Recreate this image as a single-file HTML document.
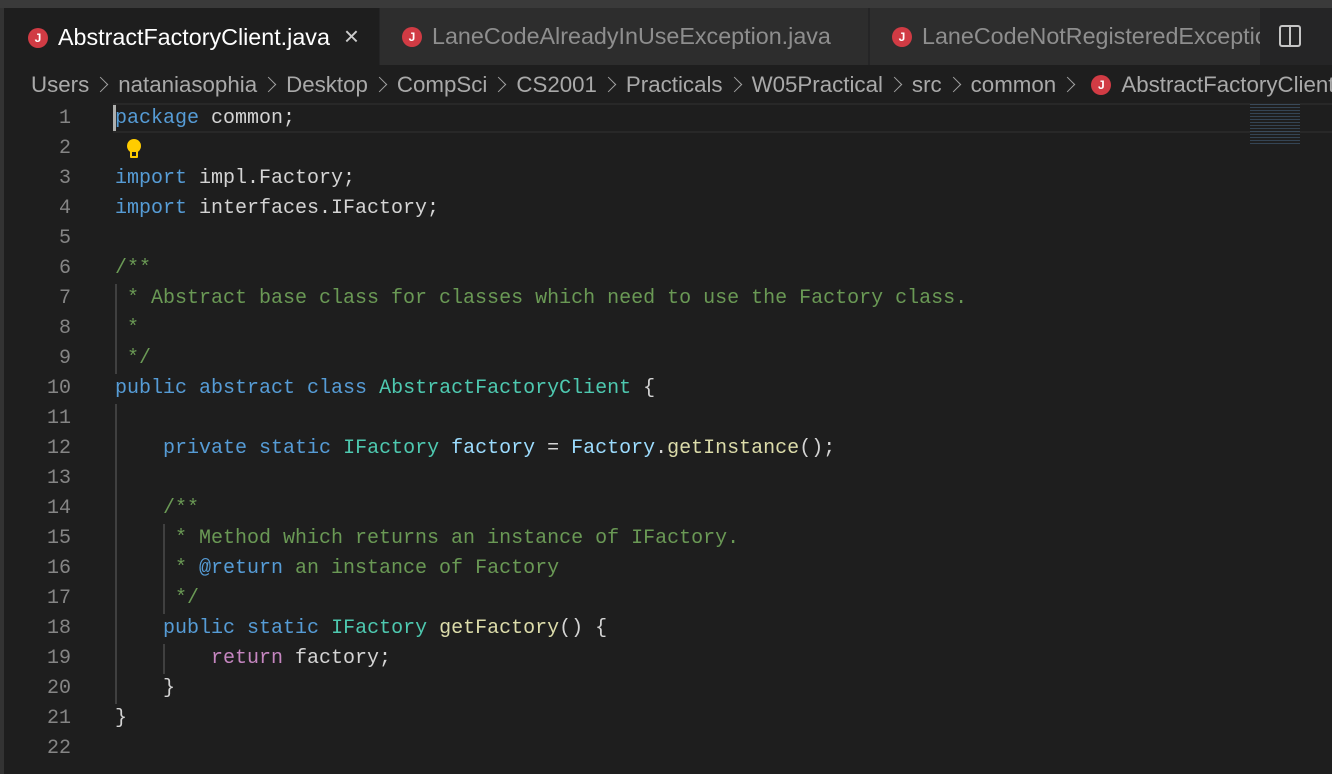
<!DOCTYPE html>
<html><head><meta charset="utf-8"><style>
*{margin:0;padding:0;box-sizing:border-box}
body{width:1332px;height:774px;background:#1e1e1e;overflow:hidden;position:relative;font-family:"Liberation Sans",sans-serif}
.top{position:absolute;left:0;top:0;width:1332px;height:8px;background:#3a3a3a}
.lstrip{position:absolute;left:0;top:8px;width:4px;height:766px;background:#333}
.tabbar{position:absolute;left:4px;top:8px;width:1328px;height:57px;background:#252526}
.tab{position:absolute;top:0;height:57px;background:#2d2d2d;color:#8e8e8e;font-size:23.3px;line-height:57px;white-space:nowrap;overflow:hidden}
.tab.act{background:#1e1e1e;color:#fff}
.j{display:inline-block;width:20px;height:20px;border-radius:50%;background:#d13b44;color:#fff;font-size:12px;font-weight:bold;line-height:20px;text-align:center;vertical-align:3px;margin-right:10px}
.bc{position:absolute;left:31px;top:70px;width:1301px;overflow:hidden;color:#a9a9a9;font-size:22.3px;white-space:nowrap;line-height:30px}
.bc .s{display:inline-block;width:11px;height:11px;border-right:1.5px solid #a0a0a0;border-top:1.5px solid #a0a0a0;transform:rotate(45deg);margin:0 12px 2px 6px}
.code{position:absolute;left:0;top:104px;font-family:"Liberation Mono","DejaVu Sans Mono",monospace;font-size:20px}
.ln{position:absolute;left:0;width:71px;text-align:right;color:#858585;height:30px;line-height:30px}
.l{position:absolute;left:115px;height:30px;line-height:30px;color:#d4d4d4;white-space:pre}
.k{color:#569cd6}.c{color:#6a9955}.t{color:#4ec9b0}.f{color:#dcdcaa}.v{color:#9cdcfe}.p{color:#c586c0}
.g{position:absolute;width:2px;background:#404040}
</style></head><body>
<div class="top"></div><div class="lstrip"></div>
<div class="tabbar">
<div class="tab act" style="left:0;width:375px;padding-left:24px"><span class="j">J</span>AbstractFactoryClient.java<span style="margin-left:14px;color:#ccc;font-size:26px">×</span></div>
<div class="tab" style="left:376px;width:488px;padding-left:22px"><span class="j">J</span>LaneCodeAlreadyInUseException.java</div>
<div class="tab" style="left:866px;width:390px;padding-left:22px"><span class="j">J</span>LaneCodeNotRegisteredException.java</div>
<div style="position:absolute;left:1275px;top:17px;width:22px;height:22px;border:2px solid #c5c5c5;border-radius:3px"><div style="position:absolute;left:8px;top:0;width:2px;height:18px;background:#c5c5c5"></div></div>
</div>
<div class="bc">Users<span class="s"></span>nataniasophia<span class="s"></span>Desktop<span class="s"></span>CompSci<span class="s"></span>CS2001<span class="s"></span>Practicals<span class="s"></span>W05Practical<span class="s"></span>src<span class="s"></span>common<span class="s"></span> <span class="j" style="margin-right:10px">J</span>AbstractFactoryClient.java</div>
<div style="position:absolute;left:113px;top:103px;width:1219px;height:30px;border-top:2px solid #282828;border-bottom:2px solid #282828"></div>
<div style="position:absolute;left:113px;top:105px;width:3px;height:26px;background:#aeafad"></div>
<div style="position:absolute;left:1250px;top:102px;width:50px;height:42px;opacity:.5;background:repeating-linear-gradient(#1e1e1e 0 2px,#4a6a8a 2px 3px)"></div>
<div class="g" style="left:115px;top:284px;height:90px"></div>
<div class="g" style="left:115px;top:404px;height:300px"></div>
<div class="g" style="left:163px;top:524px;height:90px"></div>
<div class="g" style="left:163px;top:644px;height:30px"></div>
<svg style="position:absolute;left:124px;top:137px" width="20" height="24" viewBox="0 0 20 24"><circle cx="10" cy="9" r="7" fill="#ffcc00"/><rect x="6" y="13" width="8" height="8" rx="1" fill="#ffcc00"/><rect x="8" y="15" width="4" height="4" fill="#1e1e1e"/></svg>
<div class="code">
<div class="ln" style="top:0">1</div><div class="l" style="top:0"><span class="k">package</span> common;</div>
<div class="ln" style="top:30px">2</div>
<div class="ln" style="top:60px">3</div><div class="l" style="top:60px"><span class="k">import</span> impl.Factory;</div>
<div class="ln" style="top:90px">4</div><div class="l" style="top:90px"><span class="k">import</span> interfaces.IFactory;</div>
<div class="ln" style="top:120px">5</div>
<div class="ln" style="top:150px">6</div><div class="l c" style="top:150px">/**</div>
<div class="ln" style="top:180px">7</div><div class="l c" style="top:180px"> * Abstract base class for classes which need to use the Factory class.</div>
<div class="ln" style="top:210px">8</div><div class="l c" style="top:210px"> *</div>
<div class="ln" style="top:240px">9</div><div class="l c" style="top:240px"> */</div>
<div class="ln" style="top:270px">10</div><div class="l" style="top:270px"><span class="k">public abstract class</span> <span class="t">AbstractFactoryClient</span> {</div>
<div class="ln" style="top:300px">11</div>
<div class="ln" style="top:330px">12</div><div class="l" style="top:330px">    <span class="k">private static</span> <span class="t">IFactory</span> <span class="v">factory</span> = <span class="v">Factory</span>.<span class="f">getInstance</span>();</div>
<div class="ln" style="top:360px">13</div>
<div class="ln" style="top:390px">14</div><div class="l c" style="top:390px">    /**</div>
<div class="ln" style="top:420px">15</div><div class="l c" style="top:420px">     * Method which returns an instance of IFactory.</div>
<div class="ln" style="top:450px">16</div><div class="l c" style="top:450px">     * <span class="k">@return</span> an instance of Factory</div>
<div class="ln" style="top:480px">17</div><div class="l c" style="top:480px">     */</div>
<div class="ln" style="top:510px">18</div><div class="l" style="top:510px">    <span class="k">public static</span> <span class="t">IFactory</span> <span class="f">getFactory</span>() {</div>
<div class="ln" style="top:540px">19</div><div class="l" style="top:540px">        <span class="p">return</span> factory;</div>
<div class="ln" style="top:570px">20</div><div class="l" style="top:570px">    }</div>
<div class="ln" style="top:600px">21</div><div class="l" style="top:600px">}</div>
<div class="ln" style="top:630px">22</div>
</div>
</body></html>
